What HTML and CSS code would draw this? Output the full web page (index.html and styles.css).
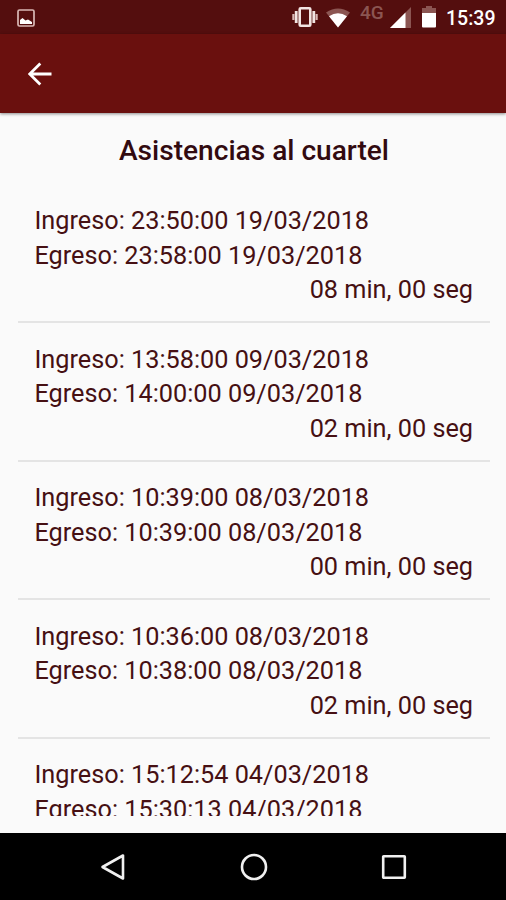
FILE: index.html
```html
<!DOCTYPE html>
<html lang="es">
  <head>
    <meta charset="utf-8" />
    <meta name="viewport" content="width=device-width,initial-scale=1" />
    <title>Asistencias al cuartel</title>
    <link rel="stylesheet" href="styles.css">
  </head>
  <body>
    <div class="status-bar">
      <svg class="status-picture" width="18" height="18" viewBox="0 0 18 18">
        <rect x="1" y="1" width="16" height="16" rx="1.5" fill="none" stroke="#d9b8b5" stroke-width="1.7" />
        <path d="M3 15v-4l2.5-2 3 2.5 2.5-1 4 2.5v2z" fill="#fff" />
      </svg>
      <div class="status-icons">
        <svg width="28" height="22" viewBox="0 0 28 22">
          <rect x="8.7" y="2.2" width="10.6" height="17.6" rx="1" fill="none" stroke="#f2e4e2" stroke-width="2.6" />
          <path d="M5.2 5v12M22.8 5v12" stroke="#f2e4e2" stroke-width="2.8" />
          <path d="M2.4 8v6M25.6 8v6" stroke="#d9b8b5" stroke-width="2.2" />
        </svg>
        <svg class="wifi" width="24" height="20" viewBox="0 0 24 20">
          <path d="M0 4.5Q12-3.5 24 4.5L12 19.5z" fill="#8b5552" />
          <path d="M3 8.2Q12 2.4 21 8.2L12 19.5z" fill="#fff" />
        </svg>
        <span class="network">4G</span>
        <svg class="signal" width="21" height="21" viewBox="0 0 21 21">
          <path d="M21 0v21H0z" fill="#8b5552" />
          <path d="M15.5 5.5V21H0z" fill="#fff" />
        </svg>
        <svg class="battery" width="14" height="22" viewBox="0 0 14 22">
          <path d="M4 0h6v2h4v6H0V2h4z" fill="#8b5552" />
          <path d="M0 7h14v13.5q0 1-1 1H1q-1 0-1-1z" fill="#fff" />
        </svg>
        <span class="clock">15:39</span>
      </div>
    </div>

    <header class="toolbar">
      <svg width="24" height="24" viewBox="0 0 24 24">
        <path d="M23.5 12H2.5M12.3 1.4L1.7 12l10.6 10.6" fill="none" stroke="#fff" stroke-width="2.8" />
      </svg>
    </header>

    <main>
      <h1>Asistencias al cuartel</h1>
      <ul class="list">
        <li>
          <p>Ingreso: 23:50:00 19/03/2018</p>
          <p>Egreso: 23:58:00 19/03/2018</p>
          <p class="duration">08 min, 00 seg</p>
        </li>
        <li>
          <p>Ingreso: 13:58:00 09/03/2018</p>
          <p>Egreso: 14:00:00 09/03/2018</p>
          <p class="duration">02 min, 00 seg</p>
        </li>
        <li>
          <p>Ingreso: 10:39:00 08/03/2018</p>
          <p>Egreso: 10:39:00 08/03/2018</p>
          <p class="duration">00 min, 00 seg</p>
        </li>
        <li>
          <p>Ingreso: 10:36:00 08/03/2018</p>
          <p>Egreso: 10:38:00 08/03/2018</p>
          <p class="duration">02 min, 00 seg</p>
        </li>
        <li>
          <p>Ingreso: 15:12:54 04/03/2018</p>
          <p>Egreso: 15:30:13 04/03/2018</p>
        </li>
      </ul>
    </main>

    <nav class="nav-bar">
      <svg width="28" height="28" viewBox="0 0 28 28">
        <path d="M24 2.5v23L3.5 14z" />
      </svg>
      <svg width="28" height="28" viewBox="0 0 28 28">
        <circle cx="14" cy="14" r="12" />
      </svg>
      <svg width="28" height="28" viewBox="0 0 28 28">
        <rect x="3.2" y="3.2" width="21.6" height="21.6" rx="0.5" />
      </svg>
    </nav>
  </body>
</html>
```

FILE: styles.css
```css
* {
  box-sizing: border-box;
}

body {
  display: flex;
  flex-direction: column;
  height: 900px;
  margin: 0;
  overflow: hidden;
  background-color: #fafafa;
  color: #461013;
  font-family: Roboto, sans-serif;
}

h1,
p,
ul {
  margin: 0;
  padding: 0;
}

.status-bar {
  display: flex;
  flex: none;
  justify-content: space-between;
  height: 34px;
  padding: 0 11px 0 17px;
  background-color: #540e0e;
}

.status-picture {
  margin-top: 9px;
}

.status-icons {
  display: flex;
  align-items: flex-start;
  padding-top: 6px;
}

.wifi {
  margin: 2px 0 0 7px;
}

.network {
  width: 25px;
  margin: -2px 0 0 10px;
  color: #8b5552;
  font-size: 19px;
  font-weight: 500;
  line-height: 18px;
}

.signal {
  margin: 1px 0 0 5px;
}

.battery {
  margin-left: 11px;
}

.clock {
  width: 49px;
  margin-left: 10px;
  color: #fff;
  font-size: 19.5px;
  font-weight: 500;
  line-height: 25px;
}

.toolbar {
  display: flex;
  flex: none;
  align-items: center;
  height: 79px;
  padding-left: 28px;
  background-color: #6a100e;
  box-shadow: 0 1px 3px rgba(0, 0, 0, 0.45);
}

main {
  flex: none;
  height: 703px;
  margin-bottom: 17px;
  padding: 0 16px 0 18px;
  overflow: hidden;
}

h1 {
  height: 71.5px;
  padding-top: 21px;
  color: #320a10;
  font-size: 28.1px;
  font-weight: 500;
  line-height: 34px;
  text-align: center;
}

.list {
  list-style: none;
}

.list li {
  height: 138.5px;
  padding: 19.5px 17px 0 16.5px;
  border-bottom: 2px solid #e4e4e4;
  font-size: 25.25px;
  line-height: 34.5px;
  white-space: nowrap;
}

.duration {
  text-align: right;
}

.nav-bar {
  display: flex;
  flex: none;
  align-items: center;
  justify-content: center;
  gap: 112.5px;
  height: 67px;
  padding-left: 1px;
  background-color: #000;
}

.nav-bar svg {
  fill: none;
  stroke: #f0f0f0;
  stroke-width: 2.6;
  stroke-linejoin: round;
}
```
